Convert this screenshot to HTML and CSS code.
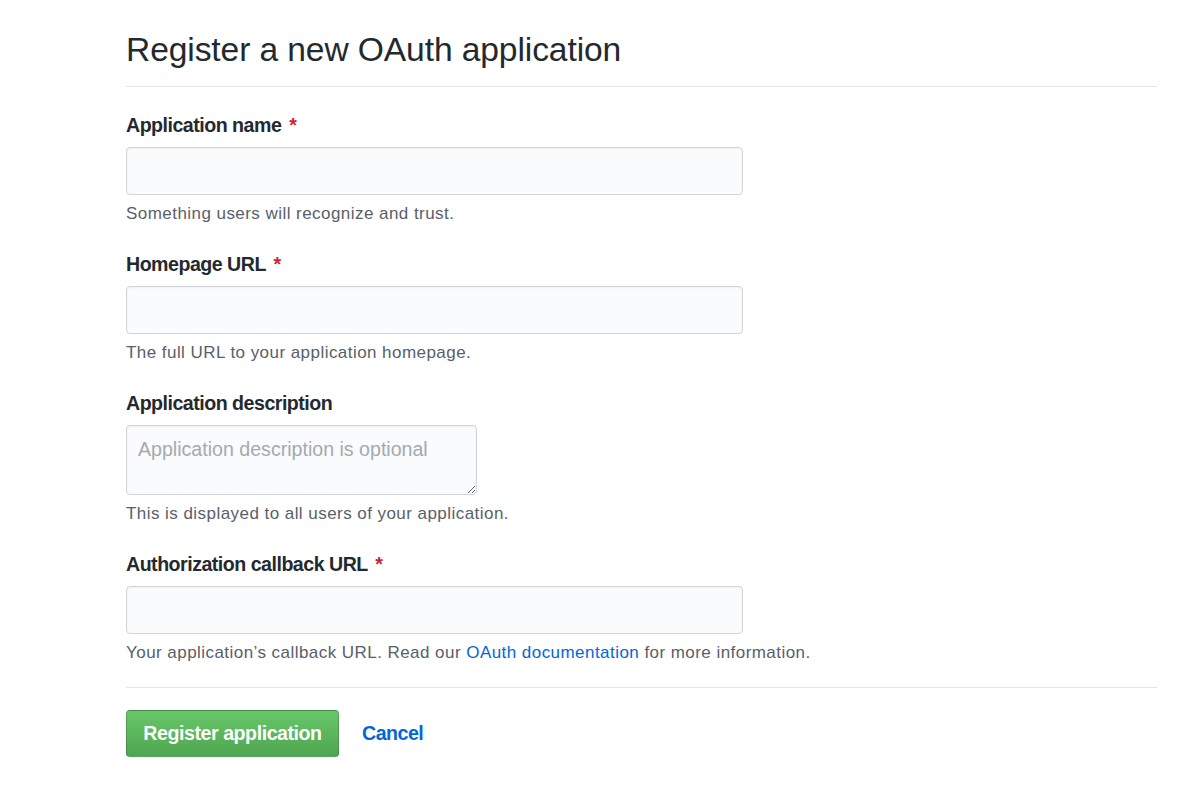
FILE: index.html
```html
<!DOCTYPE html>
<html lang="en">
<head>
<meta charset="utf-8">
<title>Register a new OAuth application</title>
<link rel="stylesheet" href="styles.css">
</head>
<body>
<div class="page">
  <h2 class="subhead">Register a new OAuth application</h2>
  <form class="form">
    <div class="group">
      <label class="label">Application name <span class="req">*</span></label>
      <input class="control wide" type="text">
      <p class="note">Something users will recognize and trust.</p>
    </div>
    <div class="group">
      <label class="label">Homepage URL <span class="req">*</span></label>
      <input class="control wide" type="text">
      <p class="note">The full URL to your application homepage.</p>
    </div>
    <div class="group">
      <label class="label">Application description</label>
      <textarea class="control area" placeholder="Application description is optional"></textarea>
      <p class="note">This is displayed to all users of your application.</p>
    </div>
    <div class="group">
      <label class="label">Authorization callback URL <span class="req">*</span></label>
      <input class="control wide" type="text">
      <p class="note">Your application’s callback URL. Read our <a class="link" href="#">OAuth documentation</a> for more information.</p>
    </div>
    <div class="actions">
      <button type="button" class="btn-primary">Register application</button>
      <a class="cancel" href="#">Cancel</a>
    </div>
  </form>
</div>
</body>
</html>
```

FILE: styles.css
```css
* { box-sizing: border-box; }
html, body { margin: 0; padding: 0; background: #fff; }
body {
  font-family: "Liberation Sans", Arial, Helvetica, sans-serif;
  color: #24292e;
}
.page {
  width: 1031px;
  margin-left: 126px;
  padding-top: 29px;
}
.subhead {
  margin: 0;
  font-size: 33.6px;
  font-weight: 400;
  line-height: 42px;
  letter-spacing: -0.1px;
  padding-bottom: 15px;
  border-bottom: 1px solid #e1e4e8;
}
.form { display: flex; flex-direction: column; padding-top: 24px; }
.group { display: flex; flex-direction: column; align-items: flex-start; margin-bottom: 24px; }
.label {
  font-size: 19.6px;
  font-weight: 700;
  line-height: 28px;
  letter-spacing: -0.5px;
  margin-bottom: 8px;
}
.req { color: #cb2431; margin-left: 3px; }
.control {
  font-family: inherit;
  font-size: 19.6px;
  color: #24292e;
  background: #fafbfc;
  border: 1px solid #d1d5da;
  border-radius: 4px;
  padding: 8px 11px;
  box-shadow: inset 0 1px 2px rgba(27,31,35,0.05);
  outline: none;
  margin: 0;
}
.wide { width: 617px; height: 48px; }
.area { width: 351px; height: 70px; line-height: 28px; padding-top: 9px; resize: both; }
.area::placeholder { color: #a3aab1; }
.note {
  margin: 7px 0 0;
  font-size: 17px;
  line-height: 24px;
  letter-spacing: 0.45px;
  color: #586069;
}
.link { color: #0366d6; text-decoration: none; }
.actions {
  display: flex;
  align-items: center;
  gap: 23px;
  border-top: 1px solid #e1e4e8;
  margin-top: -2px;
  padding-top: 22px;
}
.btn-primary {
  font-family: inherit;
  font-size: 19.6px;
  font-weight: 700;
  letter-spacing: -0.45px;
  color: #fff;
  width: 213px;
  height: 47px;
  padding: 0;
  border: 1px solid rgba(27,31,35,0.2);
  border-radius: 4px;
  background: linear-gradient(180deg, #67c769 0%, #4fa650 100%);
  cursor: pointer;
}
.cancel {
  font-size: 19.6px;
  font-weight: 700;
  letter-spacing: -0.5px;
  color: #0366d6;
  text-decoration: none;
}
```
